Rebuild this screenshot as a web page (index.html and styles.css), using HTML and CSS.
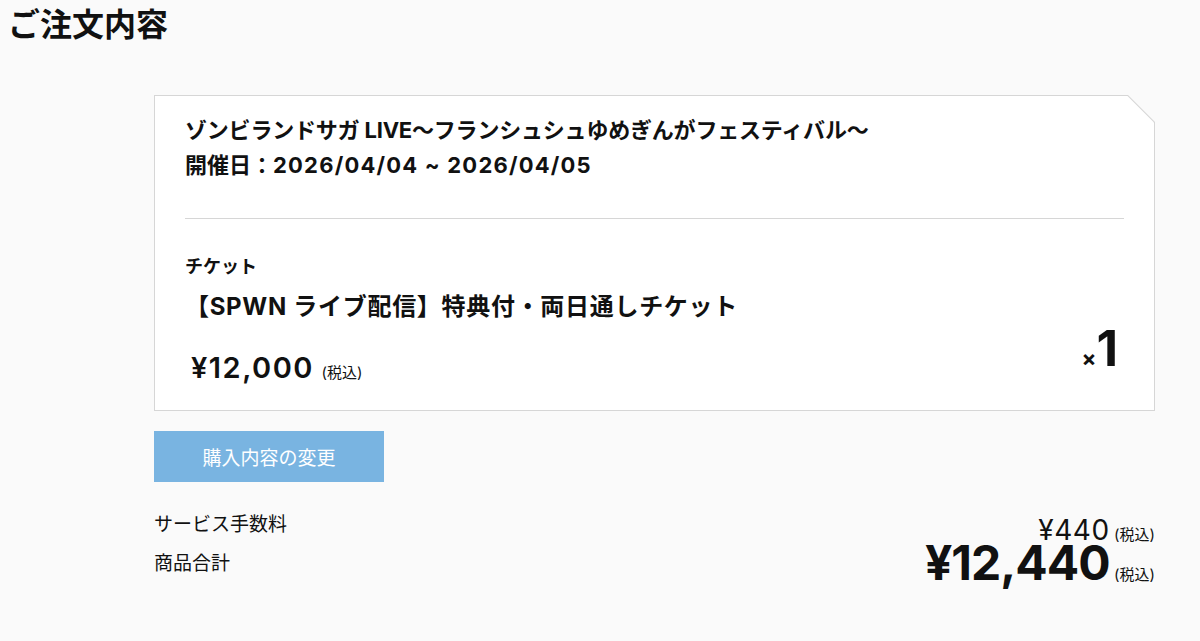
FILE: index.html
```html
<!DOCTYPE html>
<html lang="ja">
<head>
<meta charset="utf-8">
<title>ご注文内容</title>
<link rel="stylesheet" href="styles.css">
</head>
<body>
<div class="page">
  <h1 class="page-title">ご注文内容</h1>
  <main class="order">
    <div class="card-frame">
      <section class="card">
        <div class="event">
          <p class="event-name">ゾンビランドサガ LIVE〜フランシュシュゆめぎんがフェスティバル〜</p>
          <p class="event-date">開催日：<span class="dates">2026/04/04 ~ 2026/04/05</span></p>
        </div>
        <hr class="divider">
        <div class="ticket">
          <p class="ticket-label">チケット</p>
          <p class="ticket-name">【SPWN ライブ配信】特典付・両日通しチケット</p>
          <div class="ticket-row">
            <p class="ticket-price"><span class="amount">¥12,000</span> <span class="tax">(税込)</span></p>
            <p class="ticket-qty"><span class="times">×</span><span class="qty">1</span></p>
          </div>
        </div>
      </section>
    </div>
    <button class="change-btn" type="button">購入内容の変更</button>
    <div class="summary">
      <div class="summary-labels">
        <p class="summary-label">サービス手数料</p>
        <p class="summary-label">商品合計</p>
      </div>
      <div class="summary-values">
        <p class="fee"><span class="fee-amount">¥440</span> <span class="tax">(税込)</span></p>
        <p class="total"><span class="total-amount">¥12,440</span> <span class="tax">(税込)</span></p>
      </div>
    </div>
  </main>
</div>
</body>
</html>
```

FILE: styles.css
```css
* { box-sizing: border-box; }
html, body {
  margin: 0;
  padding: 0;
  background: #fafafa;
  color: #111;
  font-family: "Inter", "Noto Sans CJK JP", sans-serif;
}
p { margin: 0; }
.page {
  width: 1200px;
  padding: 0 45px 0 8px;
}
.page-title {
  margin: 0;
  padding-top: 4px;
  font-size: 32px;
  line-height: 42px;
  font-weight: 700;
}
.order {
  margin-left: 146px;
  margin-top: 49px;
}
.card-frame {
  background: #d6d6d6;
  padding: 1px;
  clip-path: polygon(0 0, calc(100% - 27px) 0, 100% 27px, 100% 100%, 0 100%);
}
.card {
  background: #fff;
  clip-path: polygon(0 0, calc(100% - 26.5px) 0, 100% 26.5px, 100% 100%, 0 100%);
  padding: 17px 30px 23px 30px;
}
.event-name, .event-date {
  font-size: 22px;
  line-height: 35px;
  font-weight: 700;
}
.event-name { letter-spacing: -0.2px; }
.dates { letter-spacing: 1.2px; }
.divider {
  border: 0;
  border-top: 1px solid #d6d6d6;
  margin: 35px 0 0 0;
  height: 0;
}
.ticket-label {
  margin-top: 36px;
  font-size: 18px;
  line-height: 24px;
  font-weight: 700;
}
.ticket-name {
  margin-top: 11px;
  font-size: 24px;
  line-height: 34px;
  font-weight: 700;
  letter-spacing: 0.7px;
}
.ticket-row {
  margin-top: 24px;
  display: flex;
  justify-content: space-between;
  align-items: flex-start;
  height: 39px;
}
.ticket-price {
  padding-left: 6px;
  line-height: 39px;
}
.amount {
  font-size: 29px;
  font-weight: 600;
  letter-spacing: 1.5px;
  margin-right: 3px;
}
.tax {
  font-size: 15px;
  font-weight: 400;
  letter-spacing: 0;
}
.ticket-qty {
  margin-top: -25px;
  padding-right: 6px;
  font-weight: 700;
  line-height: 50px;
  height: 50px;
}
.times { font-size: 22px; }
.qty { font-size: 50px; }
.change-btn {
  display: block;
  margin-top: 20px;
  width: 230px;
  height: 51px;
  border: 0;
  background: #79b4e1;
  color: #fff;
  font-family: "Inter", "Noto Sans CJK JP", sans-serif;
  font-size: 19px;
  padding: 0;
}
.summary {
  display: flex;
  justify-content: space-between;
  margin-top: 23px;
}
.summary-label {
  font-size: 19px;
  line-height: 39px;
}
.summary-values {
  text-align: right;
  padding-top: 11px;
}
.fee {
  line-height: 28px;
}
.fee-amount {
  font-size: 28px;
  font-weight: 400;
  letter-spacing: 0.5px;
}
.total {
  margin-top: -5px;
  line-height: 38px;
}
.total-amount {
  font-size: 48px;
  font-weight: 700;
  letter-spacing: -1px;
}
```
